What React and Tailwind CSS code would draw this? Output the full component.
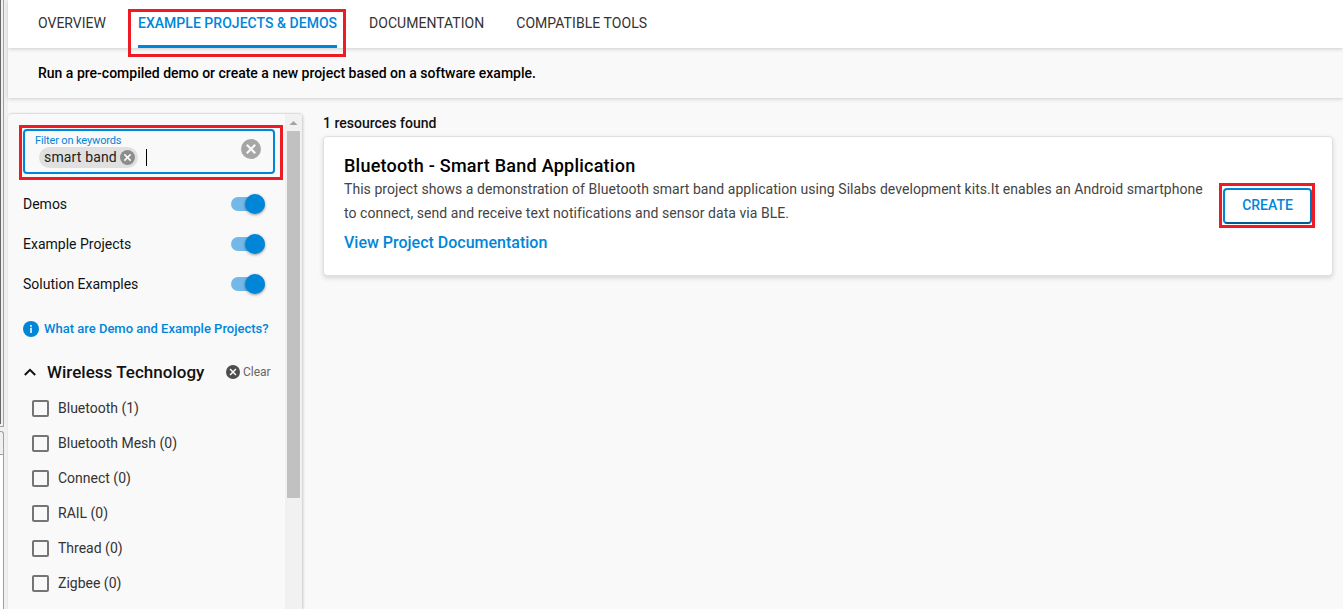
import React from "react";

const technologies = [
  "Bluetooth (1)",
  "Bluetooth Mesh (0)",
  "Connect (0)",
  "RAIL (0)",
  "Thread (0)",
  "Zigbee (0)",
];

function CancelIcon({ className }) {
  return (
    <svg viewBox="2 2 20 20" className={className} aria-hidden="true">
      <circle cx="12" cy="12" r="10" fill="currentColor" />
      <path d="m7.8 7.8 8.4 8.4m0-8.4-8.4 8.4" fill="none" stroke="#f9f9f9" strokeWidth="2.2" />
    </svg>
  );
}

function Highlight({ className }) {
  return <div className={`pointer-events-none absolute z-20 border-3 border-[#ed1c24] ${className}`} />;
}

function WindowEdge() {
  return (
    <div className="flex w-2 shrink-0 flex-col bg-[#f0f0f0]">
      <div className="flex h-[427px] w-1 border-b border-r border-[#a0a0a0] bg-[#f0f0f0]">
        <div className="h-[424px] w-px bg-[#696969]" />
      </div>
      <div className="h-1" />
      <div className="h-[23px] w-1 rounded-tr-[3px] border-r border-t border-[#a0a0a0]" />
      <div className="w-1 flex-1 border-r border-t border-[#a0a0a0] bg-white" />
    </div>
  );
}

function ToggleRow({ label }) {
  return (
    <div className="flex h-10 items-center justify-between pr-5">
      <span className="text-sm">{label}</span>
      <span className="flex h-[14px] w-[34px] items-center justify-end rounded-full bg-[#73b9e8]">
        <span className="size-5 shrink-0 rounded-full bg-[#0086d9] shadow-[0_1px_3px_rgba(0,0,0,0.4)]" />
      </span>
    </div>
  );
}

function Sidebar() {
  return (
    <aside className="flex h-[496px] w-[294px] shrink-0 overflow-hidden rounded-t border-t border-[#dedede] bg-[#f9f9f9] shadow-[1px_1px_3px_rgba(0,0,0,0.2)]">
      <div className="w-[277px] shrink-0 pl-[15px] pt-[15px]">
        <div className="relative flex h-[45px] w-[252px] justify-between rounded border-2 border-[#0086d9] pl-[10px] pr-3">
          <Highlight className="-left-[6px] -top-[6px] h-[55px] w-[264px]" />
          <div>
            <div className="mt-[3px] h-[13px] text-[11px] leading-[13px] tracking-[-0.14px] text-[#0086d9]">Filter on keywords</div>
            <div className="flex items-center">
              <span className="ml-1 flex h-[21px] w-[99px] items-center justify-between rounded-full bg-[#e0e0e0] pl-[5px] pr-[3px] text-sm text-[#212121]">
                <span className="-mt-0.5 tracking-[0.15px]">smart band</span>
                <CancelIcon className="size-[15px] text-[#8d8d8d]" />
              </span>
              <span className="ml-2 h-[17px] w-px bg-black" />
            </div>
          </div>
          <CancelIcon className="mt-2 size-5 text-[#a6a6a6]" />
        </div>
        <div className="mt-[10px]">
          <ToggleRow label="Demos" />
          <ToggleRow label="Example Projects" />
          <ToggleRow label="Solution Examples" />
        </div>
        <div className="mt-4 flex h-[18px] items-center text-[#0086d9]">
          <svg viewBox="0 0 16 16" className="size-4" aria-hidden="true">
            <circle cx="8" cy="8" r="8" fill="currentColor" />
            <path d="M7.1 4h1.8v1.7H7.1zM7.1 6.8h1.8V12H7.1z" fill="#fff" fillOpacity=".85" />
          </svg>
          <span className="ml-[5px] whitespace-nowrap text-[13px] font-medium">What are Demo and Example Projects?</span>
        </div>
        <div className="mt-[22px] flex h-6 items-center">
          <svg viewBox="0 0 12 8" className="ml-px h-2 w-3" aria-hidden="true">
            <path d="M.8 7 6 1.8 11.2 7" fill="none" stroke="#111" strokeWidth="2" />
          </svg>
          <h2 className="ml-[11px] mt-px w-[179px] text-[17px] font-medium tracking-[0.02px]">Wireless Technology</h2>
          <CancelIcon className="size-[14px] text-[#4d4d4d]" />
          <span className="ml-[3px] text-xs text-[#666]">Clear</span>
        </div>
        <div className="mt-[7px] pl-[9px]">
          {technologies.map((name) => (
            <div key={name} className="flex h-[35px] items-center gap-[9px] text-sm text-[#333]">
              <span className="size-[17px] rounded-[2px] border-2 border-[#757575]" />
              <span className="-mt-0.5">{name}</span>
            </div>
          ))}
        </div>
      </div>
      <div className="flex flex-1 flex-col items-center bg-[#f1f1f1]">
        <svg viewBox="0 0 17 17" className="size-[17px]" aria-hidden="true">
          <path d="M4.5 11 8.5 7l4 4z" fill="#a3a3a3" />
        </svg>
        <div className="h-[367px] w-[13px] bg-[#c1c1c1]" />
      </div>
    </aside>
  );
}

export default function App() {
  return (
    <div className="flex h-[609px] w-[1343px] overflow-hidden bg-[#f9f9f9] font-[Roboto,sans-serif] text-[#111]">
      <WindowEdge />
      <div className="min-w-0 flex-1">
        <nav className="relative z-10 flex h-12 gap-8 bg-white pl-[30px] text-sm leading-[46px] text-[#333] shadow-[0_1px_4px_rgba(0,0,0,0.18)]">
          <span>OVERVIEW</span>
          <span className="relative h-12 border-b-3 border-[#0086d9] font-medium tracking-[0.03px] text-[#0086d9]">
            EXAMPLE PROJECTS &amp; DEMOS
            <Highlight className="-left-[10px] top-[9px] h-12 w-[218px]" />
          </span>
          <span className="tracking-[0.02px]">DOCUMENTATION</span>
          <span className="tracking-[0.06px]">COMPATIBLE TOOLS</span>
        </nav>
        <div className="h-[50px] bg-[#f9f9f9] pl-[30px] text-sm font-medium leading-[50px] text-black shadow-[0_1px_4px_rgba(0,0,0,0.18)]">
          Run a pre-compiled demo or create a new project based on a software example.
        </div>
        <div className="flex pt-[15px]">
          <Sidebar />
          <main className="ml-[21px] w-[1010px]">
            <div className="h-[23px] text-sm font-medium leading-5">1 resources found</div>
            <article className="flex h-[140px] rounded border border-[#e0e0e0] bg-white pl-5 pr-5 pt-[17px] shadow-[0_2px_5px_rgba(0,0,0,0.15)]">
              <div className="w-[879px]">
                <h1 className="h-[23px] text-lg font-medium leading-6 tracking-[0.24px] text-black">Bluetooth - Smart Band Application</h1>
                <p className="whitespace-nowrap text-sm leading-6 tracking-[0.047px] text-[#444]">
                  This project shows a demonstration of Bluetooth smart band application using Silabs development kits.It enables an Android smartphone
                  <br />
                  to connect, send and receive text notifications and sensor data via BLE.
                </p>
                <a className="mt-[6px] block text-base font-medium leading-6 text-[#0086d9]">View Project Documentation</a>
              </div>
              <div className="relative mt-[34px] h-9 w-[89px]">
                <button className="h-9 w-[89px] rounded border-2 border-[#0086d9] border-b-[#005b94] border-r-[#0074bc] bg-white pb-0.5 text-sm font-medium text-[#0086d9]">CREATE</button>
                <Highlight className="-left-1 -top-[5px] h-[45px] w-24" />
              </div>
            </article>
          </main>
        </div>
      </div>
    </div>
  );
}
